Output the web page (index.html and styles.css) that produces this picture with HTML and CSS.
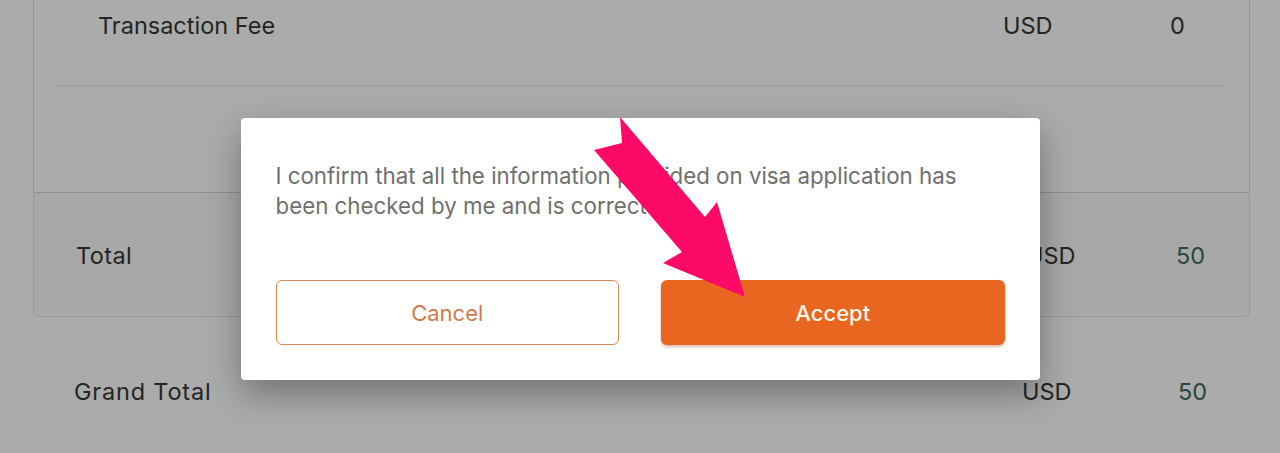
FILE: index.html
```html
<!DOCTYPE html>
<html lang="en">
<head>
<meta charset="utf-8">
<title>Confirm visa application</title>
<link rel="stylesheet" href="styles.css">
</head>
<body>
<main class="page">
  <section class="card">
    <div class="fees">
      <div class="row fee-row">
        <span class="label">Transaction Fee</span>
        <span class="cur">USD</span>
        <span class="amt">0</span>
      </div>
    </div>
    <div class="row total-row">
      <span class="label">Total</span>
      <span class="cur">USD</span>
      <span class="amt green">50</span>
    </div>
  </section>
  <div class="row grand-row">
    <span class="label">Grand Total</span>
    <span class="cur">USD</span>
    <span class="amt green">50</span>
  </div>
</main>

<div class="overlay">
  <div class="modal" role="dialog" aria-modal="true">
    <p class="msg">I confirm that all the information provided on visa application has been checked by me and is correct.</p>
    <div class="actions">
      <button class="btn btn-outline" type="button">Cancel</button>
      <button class="btn btn-fill" type="button">Accept</button>
    </div>
  </div>
</div>

<svg class="arrow" width="1280" height="453" viewBox="0 0 1280 453" aria-hidden="true">
  <polygon points="620,117 705,217 717,202 745,297 663,263 682,252 594,150 622,143" fill="#fd0a68"/>
</svg>
</body>
</html>
```

FILE: styles.css
```css
* { box-sizing: border-box; }

html, body {
  margin: 0;
  padding: 0;
  height: 100%;
  overflow: hidden;
}

body {
  background: #ffffff;
  font-family: Inter, "Noto Sans", "Liberation Sans", sans-serif;
  color: #363636;
  position: relative;
}

.card {
  margin-left: 33px;
  width: 1217px;
  border: 1px solid #e2e2e2;
  border-top: none;
  border-radius: 0 0 6px 6px;
  background: #ffffff;
}

.fees {
  height: 193px;
  padding: 0 23px 0 21px;
  border-bottom: 1px solid #d4d4d4;
}

.row {
  display: flex;
  align-items: center;
  font-size: 23.5px;
  line-height: 28px;
}

.label { flex: 1; }

.fee-row {
  height: 86px;
  padding: 12px 0 46px 43px;
  border-bottom: 1px solid #ebebeb;
}
.fee-row .cur { width: 167px; }
.fee-row .amt { width: 56px; }

.total-row {
  height: 123px;
  padding: 3px 0 0 42px;
  background: #fbfbfb;
  border-radius: 0 0 6px 6px;
}
.total-row .label { letter-spacing: 0.4px; }
.total-row .cur { width: 150px; }
.total-row .amt { width: 73px; }

.grand-row {
  height: 140px;
  padding: 61px 0 0 74px;
  align-items: flex-start;
}
.grand-row .label { letter-spacing: 0.8px; }
.grand-row .cur { width: 156px; }
.grand-row .amt { width: 102px; }

.green { color: #3f6a5d; }

.overlay {
  position: absolute;
  inset: 0;
  background: rgba(0, 0, 0, 0.33);
  display: flex;
  justify-content: center;
  align-items: flex-start;
  padding-top: 118px;
}

.modal {
  width: 799px;
  height: 262px;
  background: #ffffff;
  border-radius: 4px;
  padding: 43px 35px 35px;
  box-shadow: 0 14px 34px rgba(0, 0, 0, 0.32);
}

.msg {
  margin: 0;
  font-size: 22.3px;
  line-height: 30px;
  color: #6f6f6f;
  height: 119px;
}

.actions {
  display: grid;
  grid-template-columns: 1fr 1fr;
  gap: 42px;
}

.btn {
  height: 65px;
  border-radius: 6px;
  font-family: inherit;
  font-size: 22px;
  cursor: pointer;
}

.btn-outline {
  background: #ffffff;
  border: 1.5px solid #dc8b5c;
  color: #d27a4c;
}

.btn-fill {
  background: #e8661f;
  border: none;
  color: #fff6ea;
  font-weight: 500;
  box-shadow: 0 2px 3px rgba(150, 70, 20, 0.35);
}

.arrow {
  position: absolute;
  left: 0;
  top: 0;
  pointer-events: none;
}
```
